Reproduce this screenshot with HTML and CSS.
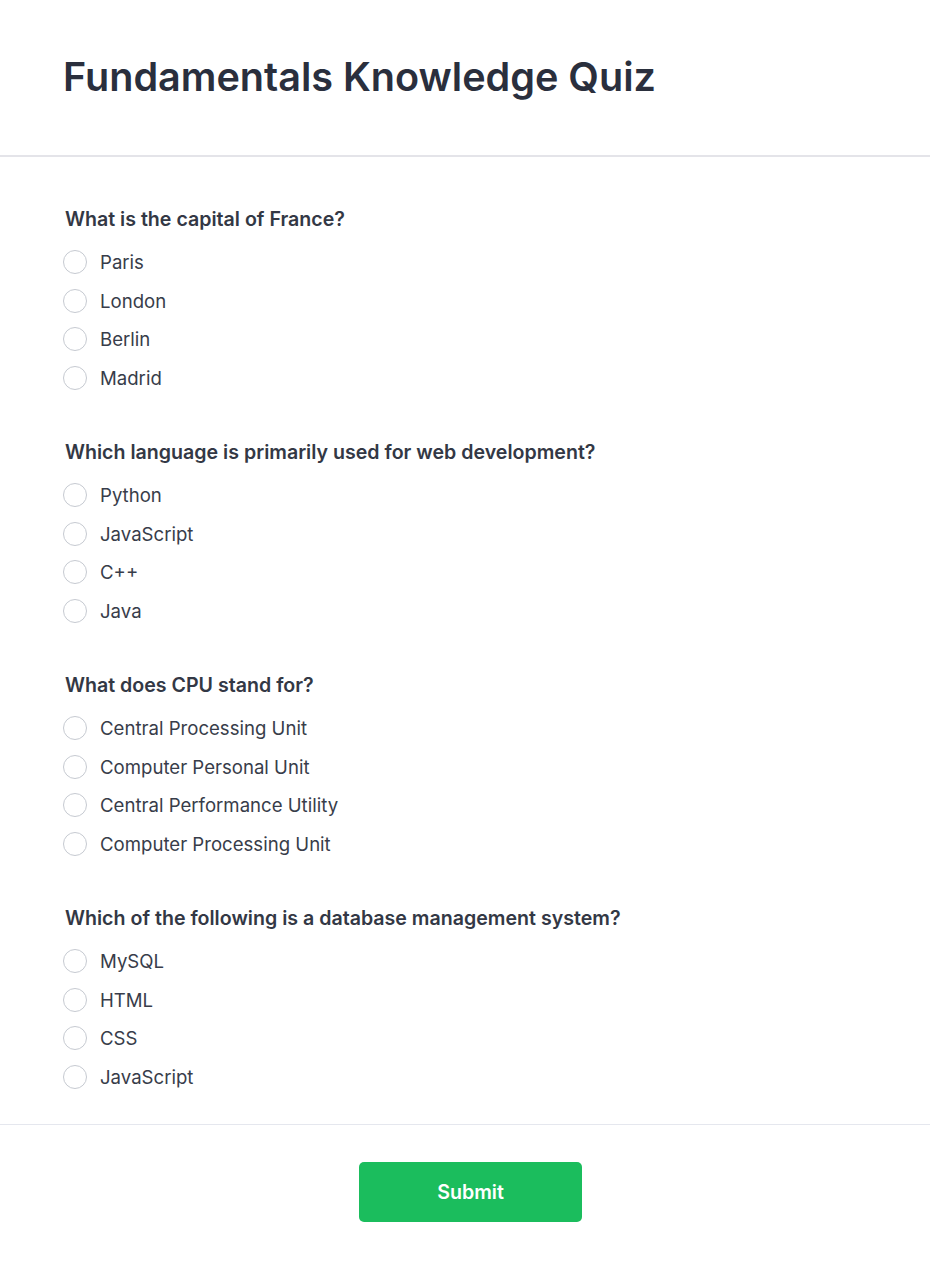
FILE: index.html
```html
<!DOCTYPE html>
<html lang="en">
<head>
<meta charset="utf-8">
<title>Fundamentals Knowledge Quiz</title>
<link rel="stylesheet" href="styles.css">
</head>
<body>
<header class="header">
  <h1 class="title">Fundamentals Knowledge Quiz</h1>
</header>
<main class="quiz">
  <section class="question">
    <h2 class="question-text">What is the capital of France?</h2>
    <div class="options">
      <label class="option"><input type="radio" name="q1"><span>Paris</span></label>
      <label class="option"><input type="radio" name="q1"><span>London</span></label>
      <label class="option"><input type="radio" name="q1"><span>Berlin</span></label>
      <label class="option"><input type="radio" name="q1"><span>Madrid</span></label>
    </div>
  </section>
  <section class="question">
    <h2 class="question-text">Which language is primarily used for web development?</h2>
    <div class="options">
      <label class="option"><input type="radio" name="q2"><span>Python</span></label>
      <label class="option"><input type="radio" name="q2"><span>JavaScript</span></label>
      <label class="option"><input type="radio" name="q2"><span>C++</span></label>
      <label class="option"><input type="radio" name="q2"><span>Java</span></label>
    </div>
  </section>
  <section class="question">
    <h2 class="question-text">What does CPU stand for?</h2>
    <div class="options">
      <label class="option"><input type="radio" name="q3"><span>Central Processing Unit</span></label>
      <label class="option"><input type="radio" name="q3"><span>Computer Personal Unit</span></label>
      <label class="option"><input type="radio" name="q3"><span>Central Performance Utility</span></label>
      <label class="option"><input type="radio" name="q3"><span>Computer Processing Unit</span></label>
    </div>
  </section>
  <section class="question">
    <h2 class="question-text">Which of the following is a database management system?</h2>
    <div class="options">
      <label class="option"><input type="radio" name="q4"><span>MySQL</span></label>
      <label class="option"><input type="radio" name="q4"><span>HTML</span></label>
      <label class="option"><input type="radio" name="q4"><span>CSS</span></label>
      <label class="option"><input type="radio" name="q4"><span>JavaScript</span></label>
    </div>
  </section>
</main>
<footer class="footer">
  <button class="submit" type="button">Submit</button>
</footer>
</body>
</html>
```

FILE: styles.css
```css
* { box-sizing: border-box; }
html, body {
  margin: 0;
  padding: 0;
  background: #ffffff;
  font-family: Inter, "Noto Sans", sans-serif;
  color: #333a48;
}
.header {
  padding: 53px 63px 54px;
  border-bottom: 2px solid #e4e4e9;
}
.title {
  margin: 0;
  font-size: 39.6px;
  line-height: 48px;
  font-weight: 600;
  color: #2a2f3d;
}
.quiz {
  padding: 48px 63px 33px;
  display: flex;
  flex-direction: column;
  gap: 46.5px;
}
.question {
  display: flex;
  flex-direction: column;
  gap: 15px;
}
.question-text {
  margin: 0;
  padding-left: 2px;
  font-size: 19.6px;
  line-height: 28px;
  font-weight: 600;
  color: #333845;
}
.options {
  display: flex;
  flex-direction: column;
  gap: 10.5px;
}
.option {
  display: flex;
  align-items: center;
  gap: 13px;
  font-size: 18.6px;
  line-height: 28px;
  color: #383d4a;
  cursor: pointer;
}
.option input {
  appearance: none;
  -webkit-appearance: none;
  margin: 0;
  width: 24px;
  height: 24px;
  border: 1px solid #c6cad1;
  border-radius: 50%;
  background: #fff;
  flex: none;
}
.footer {
  border-top: 1px solid #e5e7ee;
  padding: 37px 0 49px 11px;
  display: flex;
  justify-content: center;
}
.submit {
  width: 223px;
  height: 60px;
  border: 0;
  border-radius: 5px;
  background: #1bbd5d;
  color: #ffffff;
  font-family: Inter, "Noto Sans", sans-serif;
  font-size: 19.6px;
  font-weight: 600;
  cursor: pointer;
}
```
